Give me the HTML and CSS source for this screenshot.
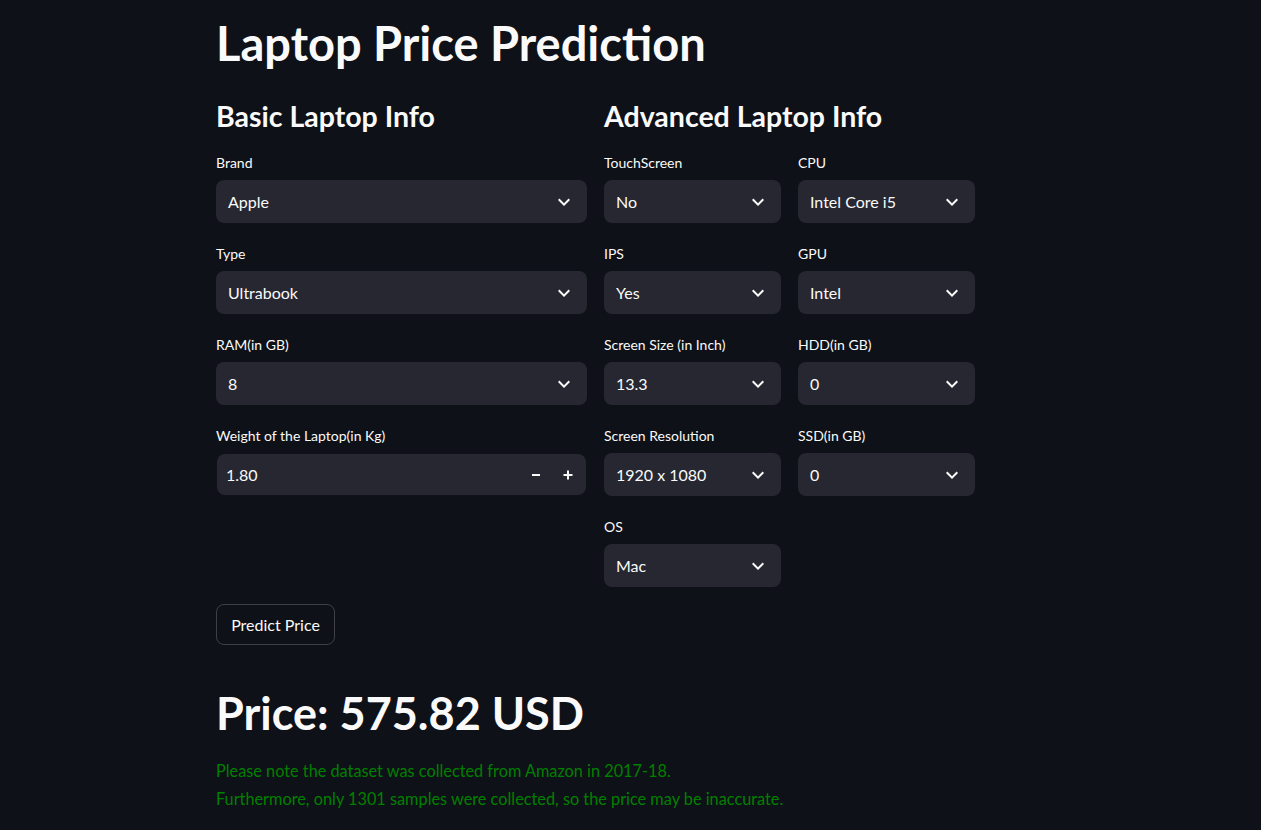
FILE: index.html
```html
<!DOCTYPE html>
<html lang="en">
<head>
<meta charset="utf-8">
<title>Laptop Price Prediction</title>
<link rel="stylesheet" href="styles.css">
</head>
<body>
<main class="app">
  <h1 class="title">Laptop Price Prediction</h1>
  <div class="columns">
    <section class="col">
      <h2 class="subhead">Basic Laptop Info</h2>
      <div class="stack">
        <div class="field">
          <div class="label">Brand</div>
          <div class="select"><span>Apple</span><svg class="chev" viewBox="0 0 24 24"><path d="M16.59 8.59L12 13.17 7.41 8.59 6 10l6 6 6-6z"/></svg></div>
        </div>
        <div class="field">
          <div class="label">Type</div>
          <div class="select"><span>Ultrabook</span><svg class="chev" viewBox="0 0 24 24"><path d="M16.59 8.59L12 13.17 7.41 8.59 6 10l6 6 6-6z"/></svg></div>
        </div>
        <div class="field">
          <div class="label">RAM(in GB)</div>
          <div class="select"><span>8</span><svg class="chev" viewBox="0 0 24 24"><path d="M16.59 8.59L12 13.17 7.41 8.59 6 10l6 6 6-6z"/></svg></div>
        </div>
        <div class="field">
          <div class="label">Weight of the Laptop(in Kg)</div>
          <div class="number">
            <span class="num-value">1.80</span>
            <span class="step"><svg viewBox="0 0 10 10"><path d="M1 5h8"/></svg></span>
            <span class="step"><svg viewBox="0 0 10 10"><path d="M0.5 5h9M5 0.5v9"/></svg></span>
          </div>
        </div>
      </div>
    </section>
    <section class="col">
      <h2 class="subhead">Advanced Laptop Info</h2>
      <div class="subcols">
        <div class="stack">
          <div class="field">
            <div class="label">TouchScreen</div>
            <div class="select"><span>No</span><svg class="chev" viewBox="0 0 24 24"><path d="M16.59 8.59L12 13.17 7.41 8.59 6 10l6 6 6-6z"/></svg></div>
          </div>
          <div class="field">
            <div class="label">IPS</div>
            <div class="select"><span>Yes</span><svg class="chev" viewBox="0 0 24 24"><path d="M16.59 8.59L12 13.17 7.41 8.59 6 10l6 6 6-6z"/></svg></div>
          </div>
          <div class="field">
            <div class="label">Screen Size (in Inch)</div>
            <div class="select"><span>13.3</span><svg class="chev" viewBox="0 0 24 24"><path d="M16.59 8.59L12 13.17 7.41 8.59 6 10l6 6 6-6z"/></svg></div>
          </div>
          <div class="field">
            <div class="label">Screen Resolution</div>
            <div class="select"><span>1920 x 1080</span><svg class="chev" viewBox="0 0 24 24"><path d="M16.59 8.59L12 13.17 7.41 8.59 6 10l6 6 6-6z"/></svg></div>
          </div>
          <div class="field">
            <div class="label">OS</div>
            <div class="select"><span>Mac</span><svg class="chev" viewBox="0 0 24 24"><path d="M16.59 8.59L12 13.17 7.41 8.59 6 10l6 6 6-6z"/></svg></div>
          </div>
        </div>
        <div class="stack">
          <div class="field">
            <div class="label">CPU</div>
            <div class="select"><span>Intel Core i5</span><svg class="chev" viewBox="0 0 24 24"><path d="M16.59 8.59L12 13.17 7.41 8.59 6 10l6 6 6-6z"/></svg></div>
          </div>
          <div class="field">
            <div class="label">GPU</div>
            <div class="select"><span>Intel</span><svg class="chev" viewBox="0 0 24 24"><path d="M16.59 8.59L12 13.17 7.41 8.59 6 10l6 6 6-6z"/></svg></div>
          </div>
          <div class="field">
            <div class="label">HDD(in GB)</div>
            <div class="select"><span>0</span><svg class="chev" viewBox="0 0 24 24"><path d="M16.59 8.59L12 13.17 7.41 8.59 6 10l6 6 6-6z"/></svg></div>
          </div>
          <div class="field">
            <div class="label">SSD(in GB)</div>
            <div class="select"><span>0</span><svg class="chev" viewBox="0 0 24 24"><path d="M16.59 8.59L12 13.17 7.41 8.59 6 10l6 6 6-6z"/></svg></div>
          </div>
        </div>
      </div>
    </section>
  </div>
  <button class="btn" type="button">Predict Price</button>
  <h1 class="price">Price: 575.82 USD</h1>
  <p class="note">Please note the dataset was collected from Amazon in 2017-18.</p>
  <p class="note">Furthermore, only 1301 samples were collected, so the price may be inaccurate.</p>
</main>
</body>
</html>
```

FILE: styles.css
```css
html, body {
  margin: 0;
  padding: 0;
  background: #0e1117;
  color: #fafafa;
  font-family: Lato, "Noto Sans", sans-serif;
}

.app {
  width: 759px;
  margin-left: 216px;
  padding-top: 13px;
}

.title {
  margin: 0;
  font-size: 47px;
  font-weight: 700;
  line-height: 60px;
}

.columns {
  display: grid;
  grid-template-columns: 371px 371px;
  column-gap: 17px;
  margin-top: 23px;
}

.subhead {
  margin: 0;
  font-size: 28.5px;
  font-weight: 700;
  line-height: 40px;
}

.subcols {
  display: grid;
  grid-template-columns: 177px 177px;
  column-gap: 17px;
}

.stack {
  display: flex;
  flex-direction: column;
  gap: 21px;
  margin-top: 17px;
}

.field {
  display: flex;
  flex-direction: column;
}

.label {
  font-size: 14px;
  line-height: 20px;
  margin-bottom: 7px;
}

.select {
  height: 43px;
  box-sizing: border-box;
  background: #262730;
  border-radius: 8px;
  display: flex;
  align-items: center;
  justify-content: space-between;
  padding: 0 11px 0 12px;
  font-size: 16px;
}

.chev {
  width: 24px;
  height: 24px;
  fill: #fafafa;
}

.number {
  height: 41px;
  margin: 1px 1px 0 1px;
  background: #262730;
  border-radius: 8px;
  display: flex;
  align-items: center;
  padding: 0 2px 0 9px;
  font-size: 16px;
}

.num-value {
  flex: 1;
}

.step {
  width: 32px;
  height: 32px;
  display: flex;
  align-items: center;
  justify-content: center;
}

.step svg {
  width: 10px;
  height: 10px;
  stroke: #fafafa;
  stroke-width: 2;
  fill: none;
}

.btn {
  display: block;
  margin-top: 17px;
  width: 119px;
  height: 41px;
  box-sizing: border-box;
  background: transparent;
  border: 1px solid rgba(250, 250, 250, 0.2);
  border-radius: 8px;
  color: #fafafa;
  font-family: inherit;
  font-size: 16px;
  padding: 0;
}

.price {
  margin: 43px 0 0 0;
  font-size: 45px;
  font-weight: 700;
  line-height: 50px;
}

.note {
  margin: 0;
  color: #008000;
  font-size: 16.3px;
  line-height: 28px;
}

.price + .note {
  margin-top: 19px;
}
```
